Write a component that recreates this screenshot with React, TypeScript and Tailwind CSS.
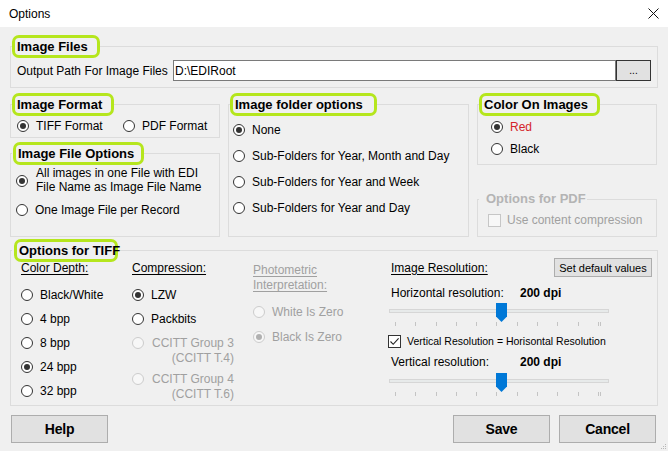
import React from 'react';

type RadioProps = { checked?: boolean; disabled?: boolean };

const Radio = ({ checked, disabled }: RadioProps) => (
  <span
    className={`inline-flex w-[12px] h-[12px] shrink-0 items-center justify-center rounded-full border ${
      disabled ? 'border-[#cccccc] bg-[#f7f7f7]' : 'border-[#333333] bg-white'
    }`}
  >
    {checked && <span className={`w-[6px] h-[6px] rounded-full ${disabled ? 'bg-[#b0b0b0]' : 'bg-[#333333]'}`} />}
  </span>
);

const RadioRow = ({ label, checked, disabled, className = '' }: RadioProps & { label: string; className?: string }) => (
  <div className={`flex h-[16px] items-center gap-[7px] ${className}`}>
    <Radio checked={checked} disabled={disabled} />
    <span className={disabled ? 'text-[#a0a0a0]' : ''}>{label}</span>
  </div>
);

const Check = ({ checked, disabled }: { checked?: boolean; disabled?: boolean }) => (
  <span
    className={`inline-flex w-[13px] h-[13px] shrink-0 items-center justify-center border ${
      disabled ? 'border-[#c6c6c6] bg-[#f7f7f7]' : 'border-[#333333] bg-white'
    }`}
  >
    {checked && (
      <svg width="11" height="11" viewBox="0 0 11 11">
        <path d="M1.5 5.5 L4.2 8.3 L9.6 2.4" fill="none" stroke="#222" strokeWidth="1.1" />
      </svg>
    )}
  </span>
);

// lime highlight drawn around the group titles
const Mark = ({ children, className = '' }: { children: React.ReactNode; className?: string }) => (
  <span
    className={`block h-[23px] rounded-[7px] border-[3px] border-[#b5e61d] px-[2px] text-[13px] font-bold leading-[17px] whitespace-nowrap ${className}`}
  >
    {children}
  </span>
);

const Group = ({
  title,
  className = '',
  children,
}: {
  title: React.ReactNode;
  className?: string;
  children: React.ReactNode;
}) => (
  <fieldset className={`min-w-0 border border-[#dcdcdc] ${className}`}>
    <legend className="ml-[1px]">{title}</legend>
    {children}
  </fieldset>
);

const Slider = () => {
  const ticks = [0, 1, 2, 3, 4, 5, 6, 7, 8, 9];
  return (
    <div className="relative h-[24px] w-[220px]">
      <div className="absolute left-0 right-0 top-[7px] h-[4px] border border-[#d6d6d6] bg-[#e7eaea]" />
      <svg className="absolute left-[107px] top-[1px]" width="11" height="19" viewBox="0 0 11 19">
        <path d="M0 0 H11 V13.5 L5.5 19 L0 13.5 Z" fill="#0078d7" />
      </svg>
      <div className="absolute left-[6px] top-[20px] flex w-[206px] justify-between">
        {ticks.map((t) => (
          <span key={t} className="h-[4px] w-[1px] bg-[#c4c4c4]" />
        ))}
        <span className="h-[4px] w-[3px] border-x border-[#c4c4c4]" />
      </div>
    </div>
  );
};

const Btn = ({ children, className = '' }: { children: React.ReactNode; className?: string }) => (
  <button
    className={`flex h-[28px] w-[97px] items-center justify-center border border-[#adadad] bg-[#e1e1e1] text-[14px] font-bold tracking-[-0.2px] ${className}`}
  >
    {children}
  </button>
);

export default function App() {
  return (
    <div className="relative h-[451px] w-[668px] overflow-hidden bg-[#f0f0f0] font-['Liberation_Sans',Arial,sans-serif] text-[12px] leading-[14px] text-black">
      {/* title bar */}
      <div className="flex h-[27px] items-center justify-between bg-white pl-[9px] pr-[9px]">
        <span>Options</span>
        <svg width="11" height="11" viewBox="0 0 11 11">
          <path d="M0.5 0.5 L10.5 10.5 M10.5 0.5 L0.5 10.5" stroke="#111" strokeWidth="1" />
        </svg>
      </div>

      <div className="px-[10px] pt-[8px]">
        <Group title={<Mark className="w-[88px]">Image Files</Mark>}>
          <div className="mt-[2px] flex h-[21px] items-center pb-0 pl-[6px] pr-[6px]">
            <span className="w-[156px] shrink-0">Output Path For Image Files</span>
            <div className="flex h-[21px] flex-1 items-center border border-[#7a7a7a] bg-white pl-[1px]">D:\EDIRoot</div>
            <div className="flex h-[21px] w-[35px] items-end justify-center border border-[#333333] bg-[#e1e1e1] pb-[4px] text-[10px] leading-none">
              ...
            </div>
          </div>
          <div className="h-[6px]" />
        </Group>

        <div className="mt-[5px] flex items-stretch gap-[8px]">
          {/* left column */}
          <div className="flex w-[210px] flex-col">
            <Group title={<Mark className="w-[102px]">Image Format</Mark>}>
              <div className="mt-[2px] flex h-[16px] items-center pb-0 pl-[6px]">
                <RadioRow label="TIFF Format" checked className="w-[106px]" />
                <RadioRow label="PDF Format" />
              </div>
              <div className="h-[3px]" />
            </Group>
            <Group title={<Mark className="w-[131px] ml-[1px]">Image File Options</Mark>} className="mt-[4px] flex-1">
              <div className="pl-[5px] pt-[1px] pb-[18px]">
                <div className="flex items-start gap-[8px]">
                  <span className="mt-[7px]">
                    <Radio checked />
                  </span>
                  <span className="leading-[14px]">
                    All images in one File with EDI
                    <br />
                    File Name as Image File Name
                  </span>
                </div>
                <RadioRow label="One Image File per Record" className="mt-[8px]" />
              </div>
            </Group>
          </div>

          {/* middle column */}
          <Group title={<Mark className="w-[147px]">Image folder options</Mark>} className="w-[241px]">
            <div className="flex flex-col gap-[10px] pl-[4px] pt-[6px]">
              <RadioRow label="None" checked />
              <RadioRow label="Sub-Folders for Year, Month and Day" />
              <RadioRow label="Sub-Folders for Year and Week" />
              <RadioRow label="Sub-Folders for Year and Day" />
            </div>
          </Group>

          {/* right column */}
          <div className="flex w-[180px] flex-col">
            <Group title={<Mark className="w-[121px]">Color On Images</Mark>}>
              <div className="flex flex-col gap-[6px] pb-[7px] pl-[13px] pt-[3px]">
                <div className="flex h-[16px] items-center gap-[7px]">
                  <Radio checked />
                  <span className="text-[#d4232b]">Red</span>
                </div>
                <RadioRow label="Black" />
              </div>
            </Group>
            <Group
              title={
                <span className="ml-[6px] block px-[1px] text-[13px] font-bold leading-[16px] text-[#b4b4b4]">Options for PDF</span>
              }
              className="mt-[26px] flex-1"
            >
              <div className="mt-[6px] flex h-[14px] items-center gap-[6px] pl-[10px]">
                <Check disabled />
                <span className="text-[#a0a0a0]">Use content compression</span>
              </div>
            </Group>
          </div>
        </div>

        {/* TIFF options */}
        <Group title={<Mark className="w-[104px] ml-[2px] text-[12px]">Options for TIFF</Mark>} className="mt-[2px]">
          <div className="-mt-[1px] flex h-[144px] pl-[10px]">
            <div className="w-[111px]">
              <div className="underline underline-offset-[2px]">Color Depth:</div>
              <div className="mt-[12px] flex flex-col gap-[8px]">
                <RadioRow label="Black/White" />
                <RadioRow label="4 bpp" />
                <RadioRow label="8 bpp" />
                <RadioRow label="24 bpp" checked />
                <RadioRow label="32 bpp" />
              </div>
            </div>
            <div className="w-[121px]">
              <div className="underline underline-offset-[2px]">Compression:</div>
              <div className="mt-[12px] flex flex-col gap-[8px]">
                <RadioRow label="LZW" checked />
                <RadioRow label="Packbits" />
              </div>
              <div className="mt-[9px] flex items-start gap-[8px] text-[#a0a0a0]">
                <span className="mt-[1px]">
                  <Radio disabled />
                </span>
                <div className="w-[82px] whitespace-nowrap leading-[15px]">
                  <div>CCITT Group 3</div>
                  <div className="text-right">(CCITT T.4)</div>
                </div>
              </div>
              <div className="mt-[6px] flex items-start gap-[8px] text-[#a0a0a0]">
                <span className="mt-[1px]">
                  <Radio disabled />
                </span>
                <div className="w-[82px] whitespace-nowrap leading-[15px]">
                  <div>CCITT Group 4</div>
                  <div className="text-right">(CCITT T.6)</div>
                </div>
              </div>
            </div>
            <div className="w-[136px] pt-[2px]">
              <div className="leading-[15px] text-[#a0a0a0] underline underline-offset-[2px]">
                Photometric
                <br />
                Interpretation:
              </div>
              <div className="mt-[11px] flex flex-col gap-[9px]">
                <RadioRow label="White Is Zero" disabled />
                <RadioRow label="Black Is Zero" checked disabled />
              </div>
            </div>
            <div className="-mt-[3px] w-[263px]">
              <div className="flex h-[19px] items-center justify-between">
                <span className="pl-[2px] underline underline-offset-[2px]">Image Resolution:</span>
                <button className="flex h-[19px] w-[98px] items-center justify-center whitespace-nowrap border border-[#adadad] bg-[#e1e1e1] text-[11px]">
                  Set default values
                </button>
              </div>
              <div className="mt-[9px] flex h-[14px] items-center pl-[2px]">
                <span className="w-[129px]">Horizontal resolution:</span>
                <span className="font-bold">200 dpi</span>
              </div>
              <div className="mt-[2px]">
                <Slider />
              </div>
              <div className="-ml-[1px] mt-[8px] flex h-[14px] items-center gap-[6px]">
                <Check checked />
                <span className="text-[10.5px]">Vertical Resolution = Horisontal Resolution</span>
              </div>
              <div className="mt-[7px] flex h-[14px] items-center pl-[2px]">
                <span className="w-[129px]">Vertical resolution:</span>
                <span className="font-bold">200 dpi</span>
              </div>
              <div className="mt-[3px]">
                <Slider />
              </div>
            </div>
          </div>
        </Group>

        <div className="mt-[9px] flex">
          <Btn className="ml-[1px]">Help</Btn>
          <div className="flex-1" />
          <Btn>Save</Btn>
          <Btn className="ml-[9px] mr-[2px]">Cancel</Btn>
        </div>
      </div>

      {/* size grip */}
      <svg className="absolute bottom-[1px] right-[1px]" width="6" height="6" viewBox="0 0 6 6">
        <rect x="4" y="0" width="1" height="1" fill="#b8b8b8" />
        <rect x="2" y="2" width="1" height="1" fill="#b8b8b8" />
        <rect x="4" y="2" width="1" height="1" fill="#b8b8b8" />
        <rect x="0" y="4" width="1" height="1" fill="#b8b8b8" />
        <rect x="2" y="4" width="1" height="1" fill="#b8b8b8" />
        <rect x="4" y="4" width="1" height="1" fill="#b8b8b8" />
      </svg>
    </div>
  );
}
